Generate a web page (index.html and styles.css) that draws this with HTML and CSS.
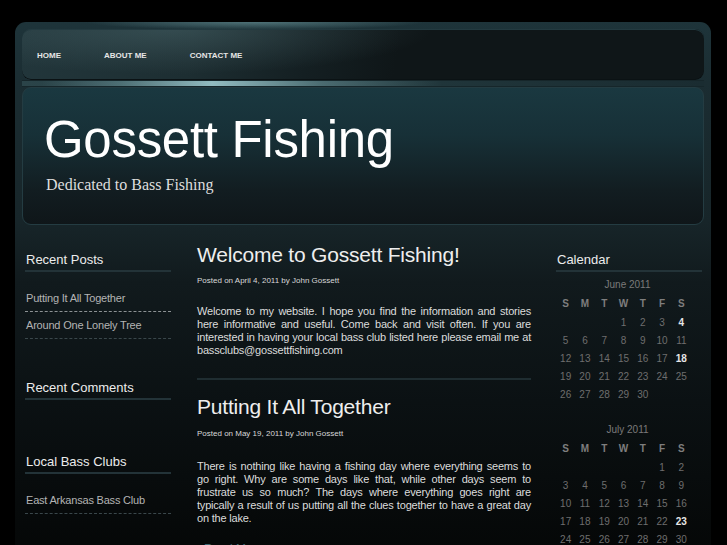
FILE: index.html
```html
<!DOCTYPE html>
<html lang="en">
<head>
<meta charset="utf-8">
<title>Gossett Fishing</title>
<link rel="stylesheet" href="styles.css">
</head>
<body>
<div class="page">
  <nav class="nav">
    <a class="nav-link" href="#">HOME</a>
    <a class="nav-link" href="#">ABOUT ME</a>
    <a class="nav-link" href="#">CONTACT ME</a>
  </nav>
  <div class="sheen"></div>
  <header class="header">
    <h1 class="site-title">Gossett Fishing</h1>
    <p class="tagline">Dedicated to Bass Fishing</p>
  </header>
  <div class="content">
    <aside class="sidebar">
      <section class="widget">
        <h3 class="widget-title">Recent Posts</h3>
        <ul class="widget-list">
          <li class="widget-item active"><a href="#">Putting It All Together</a></li>
          <li class="widget-item"><a href="#">Around One Lonely Tree</a></li>
        </ul>
      </section>
      <section class="widget widget-empty">
        <h3 class="widget-title">Recent Comments</h3>
      </section>
      <section class="widget">
        <h3 class="widget-title">Local Bass Clubs</h3>
        <ul class="widget-list">
          <li class="widget-item"><a href="#">East Arkansas Bass Club</a></li>
        </ul>
      </section>
    </aside>
    <main class="main">
      <article class="post">
        <h2 class="post-title">Welcome to Gossett Fishing!</h2>
        <div class="post-meta">Posted on April 4, 2011 by John Gossett</div>
        <p class="post-text">Welcome to my website. I hope you find the information and stories here informative and useful. Come back and visit often. If you are interested in having your local bass club listed here please email me at bassclubs@gossettfishing.com</p>
      </article>
      <article class="post">
        <h2 class="post-title">Putting It All Together</h2>
        <div class="post-meta">Posted on May 19, 2011 by John Gossett</div>
        <p class="post-text">There is nothing like having a fishing day where everything seems to go right. Why are some days like that, while other days seem to frustrate us so much? The days where everything goes right are typically a result of us putting all the clues together to have a great day on the lake.</p>
        <a class="read-more" href="#">Read More</a>
      </article>
    </main>
    <aside class="sidebar sidebar-right">
      <section class="widget">
        <h3 class="widget-title">Calendar</h3>
        <table class="cal">
          <caption>June 2011</caption>
          <thead><tr><th>S</th><th>M</th><th>T</th><th>W</th><th>T</th><th>F</th><th>S</th></tr></thead>
          <tbody>
            <tr><td></td><td></td><td></td><td>1</td><td>2</td><td>3</td><td class="has">4</td></tr>
            <tr><td>5</td><td>6</td><td>7</td><td>8</td><td>9</td><td>10</td><td>11</td></tr>
            <tr><td>12</td><td>13</td><td>14</td><td>15</td><td>16</td><td>17</td><td class="has">18</td></tr>
            <tr><td>19</td><td>20</td><td>21</td><td>22</td><td>23</td><td>24</td><td>25</td></tr>
            <tr><td>26</td><td>27</td><td>28</td><td>29</td><td>30</td><td></td><td></td></tr>
          </tbody>
        </table>
        <table class="cal cal-next">
          <caption>July 2011</caption>
          <thead><tr><th>S</th><th>M</th><th>T</th><th>W</th><th>T</th><th>F</th><th>S</th></tr></thead>
          <tbody>
            <tr><td></td><td></td><td></td><td></td><td></td><td>1</td><td>2</td></tr>
            <tr><td>3</td><td>4</td><td>5</td><td>6</td><td>7</td><td>8</td><td>9</td></tr>
            <tr><td>10</td><td>11</td><td>12</td><td>13</td><td>14</td><td>15</td><td>16</td></tr>
            <tr><td>17</td><td>18</td><td>19</td><td>20</td><td>21</td><td>22</td><td class="has">23</td></tr>
            <tr><td>24</td><td>25</td><td>26</td><td>27</td><td>28</td><td>29</td><td>30</td></tr>
          </tbody>
        </table>
      </section>
    </aside>
  </div>
</div>
</body>
</html>
```

FILE: styles.css
```css
html, body {
  margin: 0;
  padding: 0;
  background: #000;
  height: 545px;
  overflow: hidden;
}
body {
  font-family: "Liberation Sans", Arial, sans-serif;
  color: #ddd;
}
a { text-decoration: none; }

.page {
  margin: 22px 0 0 15px;
  width: 682px;
  min-height: 540px;
  padding: 7px;
  border-radius: 11px 11px 0 0;
  background:
    radial-gradient(ellipse 170px 8px at 240px 0, rgba(95, 135, 140, 0.75), rgba(95, 135, 140, 0) 100%),
    linear-gradient(180deg, #1e343a 0, #1b2d32 60px, #172529 200px, #111a1d 260px, #0b1113 380px, #050707 530px);
}

.nav {
  height: 51px;
  border-radius: 9px;
  display: flex;
  align-items: center;
  gap: 43px;
  padding: 2px 0 0 15px;
  box-sizing: border-box;
  background:
    radial-gradient(ellipse 260px 45px at 150px 0, rgba(80, 110, 115, 0.45), rgba(80, 110, 115, 0)),
    linear-gradient(100deg, #22363b 0%, #1d2e32 25%, #141f22 42%, #0f1618 55%, #0f1618 100%);
  box-shadow: inset 0 -1px 0 #0b1214, inset 0 1px 0 #233a40;
}
.nav-link {
  font-size: 8px;
  font-weight: bold;
  color: #e6e6e6;
  line-height: 10px;
}

.sheen {
  height: 7px;
  background:
    linear-gradient(90deg, rgba(150, 200, 206, 0) 20px, rgba(150, 200, 206, 0.35) 100px, rgba(165, 210, 215, 0.85) 190px, rgba(150, 200, 206, 0.35) 300px, rgba(150, 200, 206, 0) 420px),
    linear-gradient(90deg, #2b4449, #233a3f 40%, #1a2c31);
  box-shadow: inset 0 1px 0 #16262a, inset 0 -1px 0 #16262a;
}

.header {
  height: 138px;
  box-sizing: border-box;
  border: 1px solid #243c42;
  border-radius: 9px;
  padding: 26px 21px 0;
  background: linear-gradient(180deg, #1a3840 0%, #173037 35%, #121d21 75%, #0f1619 100%);
}
.site-title {
  margin: 0;
  font-size: 51px;
  line-height: 51px;
  font-weight: normal;
  letter-spacing: -0.3px;
  color: #fff;
}
.tagline {
  margin: 11px 0 0 2px;
  font-family: "Liberation Serif", "Times New Roman", serif;
  font-size: 16px;
  line-height: 18px;
  color: #dedede;
}

.content {
  display: flex;
  padding-left: 3px;
}
.sidebar {
  width: 146px;
  flex: none;
  padding-top: 27px;
}
.sidebar-right {
  margin-left: 25px;
}
.main {
  width: 334px;
  flex: none;
  margin-left: 26px;
  padding-top: 18px;
}

.widget {
  margin-bottom: 41px;
}
.widget-empty {
  padding-bottom: 13px;
}
.widget-title {
  margin: 0;
  font-size: 13px;
  line-height: 16px;
  font-weight: normal;
  color: #ececec;
  padding: 0 0 2px 1px;
  border-bottom: 2px solid #233338;
}
.widget-list {
  list-style: none;
  margin: 13px 0 0;
  padding: 0;
}
.widget-item {
  padding: 7px 0 6px 1px;
  border-bottom: 1px dashed #3a474b;
  font-size: 11px;
  line-height: 13px;
  letter-spacing: -0.2px;
}
.widget-item.active {
  border-bottom-color: #8c9294;
}
.widget-item a {
  color: #b4b4b4;
}

.post-title {
  margin: 0;
  font-size: 21px;
  line-height: 24px;
  font-weight: normal;
  letter-spacing: -0.2px;
  color: #eeeeee;
}
.post-meta {
  margin-top: 9px;
  font-size: 8px;
  line-height: 10px;
  color: #d8d8d8;
}
.post-text {
  margin: 19px 0 0;
  font-size: 11px;
  line-height: 13px;
  letter-spacing: -0.2px;
  text-align: justify;
  color: #dcdcdc;
}
.post + .post {
  margin-top: 21px;
  border-top: 2px solid #1f2d31;
  padding-top: 15px;
}
.post + .post .post-meta {
  margin-top: 10px;
}
.post + .post .post-text {
  margin-top: 21px;
}
.read-more {
  display: block;
  margin: 17px 0 0 7px;
  font-size: 12px;
  line-height: 14px;
  color: #3d6873;
}

.cal {
  width: 135px;
  table-layout: fixed;
  border-collapse: collapse;
  margin-top: 7px;
}
.cal-next {
  margin-top: 21px;
}
.cal caption {
  font-size: 10px;
  line-height: 12px;
  padding-bottom: 2px;
  color: #7a7a7a;
  text-align: center;
  padding-left: 8px;
}
.cal th {
  height: 20px;
  padding: 0;
  font-size: 10px;
  font-weight: bold;
  color: #7e7e7e;
  text-align: center;
}
.cal td {
  height: 18px;
  padding: 0;
  font-size: 10px;
  color: #6e6e6e;
  text-align: center;
}
.cal td.has {
  color: #e6e6e6;
  font-weight: bold;
}
```
